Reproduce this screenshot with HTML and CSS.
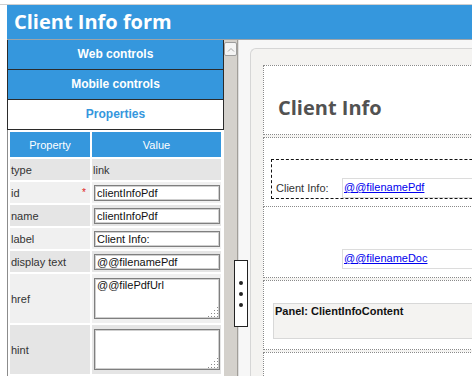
FILE: index.html
```html
<!DOCTYPE html>
<html lang="en">
<head>
  <meta charset="UTF-8">
  <meta name="viewport" content="width=device-width, initial-scale=1.0">
  <title>Client Info form</title>
  <link rel="stylesheet" href="styles.css">
</head>
<body>
  <div class="topline"></div>
  <h1 class="title">Client Info form</h1>

  <div class="main">
    <!-- 左边: 控件 / 属性 面板 -->
    <div class="side">
      <div class="tab">Web controls</div>
      <div class="tab">Mobile controls</div>
      <div class="tab active">Properties</div>
      <div class="props">
        <table class="grid">
          <tr>
            <th class="col-name">Property</th>
            <th>Value</th>
          </tr>
          <tr class="dark">
            <td>type</td>
            <td>link</td>
          </tr>
          <tr class="light">
            <td>id <span class="req">*</span></td>
            <td><input type="text" value="clientInfoPdf"></td>
          </tr>
          <tr class="dark">
            <td>name</td>
            <td><input type="text" value="clientInfoPdf"></td>
          </tr>
          <tr class="light">
            <td>label</td>
            <td><input type="text" value="Client Info:"></td>
          </tr>
          <tr class="dark">
            <td>display text</td>
            <td><input type="text" value="@@filenamePdf"></td>
          </tr>
          <tr class="light tall">
            <td>href</td>
            <td><div class="area"><textarea>@@filePdfUrl</textarea></div></td>
          </tr>
          <tr class="dark tall">
            <td>hint</td>
            <td><div class="area"><textarea></textarea></div></td>
          </tr>
        </table>
      </div>
    </div>

    <div class="scroll">
      <div class="scroll-up">
        <svg width="8" height="5" viewBox="0 0 8 5"><polyline points="1,4.5 4,1.5 7,4.5" fill="none" stroke="#a8a8a8" stroke-width="1"/></svg>
      </div>
    </div>
    <div class="gap"></div>

    <!-- 拖动条 -->
    <div class="handle">
      <span class="dot"></span>
      <span class="dot"></span>
      <span class="dot"></span>
    </div>

    <!-- 右边: 表单预览 -->
    <div class="canvas">
      <div class="sheet">
        <div class="zone z1">
          <h2 class="form-title">Client Info</h2>
        </div>
        <div class="zone z2">
          <div class="picked">
            <span class="lbl">Client Info:</span>
            <span class="cell"><a href="javascript:;">@@filenamePdf</a></span>
          </div>
        </div>
        <div class="zone z3">
          <span class="cell"><a href="javascript:;">@@filenameDoc</a></span>
        </div>
        <div class="zone z4">
          <div class="panel">Panel: ClientInfoContent</div>
        </div>
        <div class="zone z5"></div>
      </div>
    </div>
  </div>
</body>
</html>
```

FILE: styles.css
```css
*{
  padding: 0;
  margin: 0;
  box-sizing: border-box;
}
body{
  width: 472px;
  height: 376px;
  overflow: hidden;
  background-color: #fff;
  font-family: "Liberation Sans", Arial, sans-serif;
  font-size: 11px;
  color: #333;
}
.topline{
  height: 5px;
  border-bottom: 1px solid #cfcfcf;
}
.title{
  margin-left: 7px;
  height: 35px;
  padding-left: 7px;
  line-height: 34px;
  background-color: #3597dd;
  border-bottom: 1px solid #9fa4a8;
  color: #fff;
  font-family: "Open Sans", sans-serif;
  font-size: 20px;
  font-weight: 700;
}
.main{
  position: relative;
  display: flex;
  margin-left: 7px;
  height: 336px;
}
.side{
  width: 217px;
  flex: none;
}
.tab{
  height: 30px;
  line-height: 29px;
  border: 1px solid #2b2b2b;
  border-top: 0;
  background-color: #3597dd;
  color: #fff;
  font-size: 12px;
  font-weight: 700;
  text-align: center;
}
.tab.active{
  background-color: #fff;
  color: #3597dd;
}
.props{
  height: 246px;
  border-left: 1px solid #8c8c8c;
  overflow: hidden;
}
.grid{
  width: 215px;
  border-spacing: 2px;
  table-layout: fixed;
}
.grid th{
  height: 25px;
  background-color: #3597dd;
  color: #fff;
  font-weight: 400;
}
.grid .col-name{
  width: 80px;
}
.grid td{
  height: 21px;
  padding: 0 1px;
  vertical-align: middle;
}
.grid tr.tall td{
  height: 49px;
}
.grid tr.dark td{
  background-color: #e5e5e5;
}
.grid tr.light td{
  background-color: #f0f0f0;
}
.req{
  float: right;
  margin-right: 3px;
  color: #e02020;
  font-size: 10px;
}
.grid input,
.grid textarea{
  display: block;
  width: 126px;
  margin-left: 1px;
  border: 1px solid #7f7f7f;
  box-shadow: inset 0 0 0 1px #cfcfcf;
  background-color: #fff;
  font-family: "Liberation Sans", Arial, sans-serif;
  font-size: 11px;
  color: #111;
  outline: none;
}
.grid input{
  height: 16px;
  padding: 0 2px;
}
.area{
  position: relative;
  width: 127px;
}
.grid textarea{
  height: 41px;
  padding: 0 2px;
  resize: none;
}
.area::after{
  content: "";
  position: absolute;
  right: 2px;
  bottom: 2px;
  width: 11px;
  height: 11px;
  background: radial-gradient(circle, #8a8a8a 0.6px, transparent 1px) 0 0 / 3px 3px;
  clip-path: polygon(100% 0, 100% 100%, 0 100%);
}
.scroll{
  width: 14px;
  flex: none;
  background-color: #d4d1cc;
  border-right: 1px solid #a19e99;
  padding-top: 2px;
}
.scroll-up{
  display: flex;
  align-items: center;
  justify-content: center;
  width: 13px;
  height: 14px;
  background-color: #f4f4f4;
  border: 1px solid #9d9d9d;
  border-radius: 2px;
}
.gap{
  width: 12px;
  flex: none;
  border-left: 1px solid #dedede;
  background-color: #f7f7f7;
}
.handle{
  position: absolute;
  left: 227px;
  top: 220px;
  display: flex;
  flex-direction: column;
  align-items: center;
  justify-content: center;
  gap: 7px;
  width: 14px;
  height: 67px;
  background-color: #fff;
  border: 1px solid #222;
}
.dot{
  width: 4px;
  height: 4px;
  border-radius: 50%;
  background-color: #222;
}
.canvas{
  flex: 1;
  padding-top: 8px;
  background-color: #f7f7f7;
  overflow: hidden;
}
.sheet{
  width: 300px;
  height: 330px;
  padding: 16px 0 0 12px;
  background-color: #f4f3f1;
  border: 1px solid #d6d6d6;
  border-right: 0;
  border-radius: 6px 0 0 0;
}
.zone{
  width: 260px;
  height: 70px;
  margin-bottom: 2px;
  border: 1px dotted #8a8a8a;
  background-color: #fff;
}
.zone.z2{
  margin-bottom: 0;
}
.zone.z3{
  height: 71px;
  border-top: 0;
  overflow: hidden;
}
.form-title{
  padding: 30px 0 0 14px;
  line-height: 24px;
  font-family: "Open Sans", sans-serif;
  font-size: 20px;
  font-weight: 700;
  color: #525252;
}
.picked{
  display: flex;
  align-items: flex-end;
  height: 40px;
  margin: 21px 0 0 7px;
  padding-left: 4px;
  border: 1px dashed #111;
  border-right: 0;
}
.lbl{
  width: 66px;
  line-height: 19px;
  color: #333;
}
.cell{
  display: block;
  height: 20px;
  padding-left: 1px;
  line-height: 16px;
  border: 1px solid #dcdcdc;
  border-right: 0;
  flex: 1;
}
.cell a{
  color: #0000ee;
  text-decoration: underline;
}
.z3 .cell{
  margin: 42px 0 0 78px;
}
.panel{
  height: 36px;
  margin: 22px 0 0 9px;
  padding: 1px 0 0 1px;
  background-color: #f4f3f1;
  border: 1px solid #d8d8d8;
  border-right: 0;
  color: #111;
  font-weight: 700;
}
```
